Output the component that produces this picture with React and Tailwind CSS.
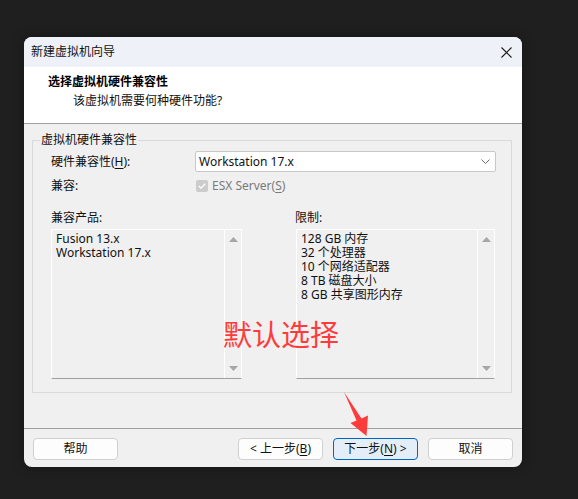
import React from "react";

const font = "font-['Noto_Sans','Noto_Sans_CJK_SC',sans-serif]";

function ListBox({ items, width }) {
  return (
    <div
      className={`flex h-[150px] border border-white border-b-[#a0a0a0] bg-[#f0f0f0] ${width}`}
    >
      <div className="flex-1 pl-[4px] pt-[2px] text-[12px] leading-[14px] text-[#111111]">
        {items.map((t) => (
          <div key={t}>{t}</div>
        ))}
      </div>
      <div className="flex w-[17px] flex-col items-center justify-between border-l border-white py-[7px]">
        <svg width="9" height="5" viewBox="0 0 9 5">
          <path d="M4.5 0L9 5H0z" fill="#a6a6a6" />
        </svg>
        <svg width="9" height="5" viewBox="0 0 9 5">
          <path d="M0 0h9L4.5 5z" fill="#a6a6a6" />
        </svg>
      </div>
    </div>
  );
}

function Button({ children, primary }) {
  return (
    <button
      className={`flex h-[22px] w-[85px] items-center justify-center rounded-[4px] border text-[12px] leading-[14px] text-[#111111] ${
        primary ? "border-[#0067c0] bg-[#e3eef9]" : "border-[#d0d0d0] bg-[#fdfdfd]"
      }`}
    >
      {children}
    </button>
  );
}

export default function App() {
  return (
    <div className={`relative h-[499px] w-[578px] overflow-hidden bg-[#1f1f1f] pl-[24px] pt-[37px] ${font}`}>
      <div className="flex h-[430px] w-[498px] flex-col overflow-hidden rounded-[8px] bg-[#f0f0f0] shadow-[0_0_12px_rgba(0,0,0,0.35)]">
        {/* title bar */}
        <div className="flex h-[30px] items-center justify-between bg-[#eef1f8] pl-[7px] pr-[10px]">
          <span className="text-[12px] text-[#111111]">新建虚拟机向导</span>
          <svg width="11" height="11" viewBox="0 0 11 11">
            <path d="M0.5 0.5L10.5 10.5M10.5 0.5L0.5 10.5" stroke="#1a1a1a" strokeWidth="1.1" />
          </svg>
        </div>

        {/* header */}
        <div className="h-[57px] border-b border-[#a0a0a0] bg-white pl-[24px] pt-[7px]">
          <div className="text-[12px] font-bold leading-[16px] text-black">选择虚拟机硬件兼容性</div>
          <div className="mt-[3px] pl-[25px] text-[12px] leading-[16px] text-[#111111]">
            该虚拟机需要何种硬件功能?
          </div>
        </div>

        {/* body */}
        <div className="h-[304px] pl-[8px] pr-[10px] pt-[8px]">
          <fieldset className="border border-[#d9d9d9] pb-[13px]">
            <legend className="ml-[7px] px-[1px] text-[12px] leading-[16px] text-[#111111]">
              虚拟机硬件兼容性
            </legend>
            <div className="pl-[18px] pt-[3px] text-[12px] text-[#111111]">
              <div className="flex h-[21px] items-center">
                <span className="w-[144px] leading-[16px]">
                  硬件兼容性(<span className="underline underline-offset-2">H</span>):
                </span>
                <div className="flex h-[21px] w-[301px] items-center justify-between rounded-[2px] border border-[#c8c8c8] bg-white pl-[3px] pr-[5px]">
                  <span className="text-[12px] leading-[14px]">Workstation 17.x</span>
                  <svg width="9" height="5" viewBox="0 0 9 5">
                    <path d="M0.5 0.5L4.5 4.5L8.5 0.5" stroke="#6b6b6b" fill="none" strokeWidth="1" />
                  </svg>
                </div>
              </div>

              <div className="mt-[4px] flex h-[20px] items-center">
                <span className="w-[145px] leading-[16px]">兼容:</span>
                <span className="flex h-[12px] w-[12px] items-center justify-center rounded-[2px] bg-[#cccccc]">
                  <svg width="8" height="6" viewBox="0 0 8 6">
                    <path d="M0.8 3L3 5.1L7.2 0.8" stroke="#ffffff" fill="none" strokeWidth="1.3" />
                  </svg>
                </span>
                <span className="ml-[4px] leading-[16px] text-[#7a7a7a]">
                  ESX Server(<span className="underline underline-offset-2">S</span>)
                </span>
              </div>

              <div className="mt-[14px] flex">
                <div className="flex flex-col">
                  <span className="leading-[16px]">兼容产品:</span>
                  <div className="mt-[3px]">
                    <ListBox width="w-[191px]" items={["Fusion 13.x", "Workstation 17.x"]} />
                  </div>
                </div>
                <div className="ml-[53px] flex flex-col">
                  <span className="leading-[16px]">限制:</span>
                  <div className="ml-[1px] mt-[3px]">
                    <ListBox
                      width="w-[199px]"
                      items={["128 GB 内存", "32 个处理器", "10 个网络适配器", "8 TB 磁盘大小", "8 GB 共享图形内存"]}
                    />
                  </div>
                </div>
              </div>
            </div>
          </fieldset>
        </div>

        {/* footer */}
        <div className="flex h-[39px] border-t border-[#a0a0a0] px-[9px] pt-[9px]">
          <Button>帮助</Button>
          <div className="ml-auto flex gap-[10px]">
            <Button>
              &lt; 上一步(<span className="underline underline-offset-2">B</span>)
            </Button>
            <Button primary>
              下一步(<span className="underline underline-offset-2">N</span>) &gt;
            </Button>
            <Button>取消</Button>
          </div>
        </div>
      </div>

      {/* annotation */}
      <div className="absolute left-[223px] top-[319px] text-[29px] leading-[32px] text-[#ff3b3b]">
        默认选择
      </div>
      <svg className="pointer-events-none absolute left-0 top-0" width="578" height="499" viewBox="0 0 578 499">
        <path d="M344 392L361.5 418.5L368 415.5L366.5 436L350.5 423L356.5 420.5Z" fill="#ff3b3b" />
      </svg>
    </div>
  );
}
